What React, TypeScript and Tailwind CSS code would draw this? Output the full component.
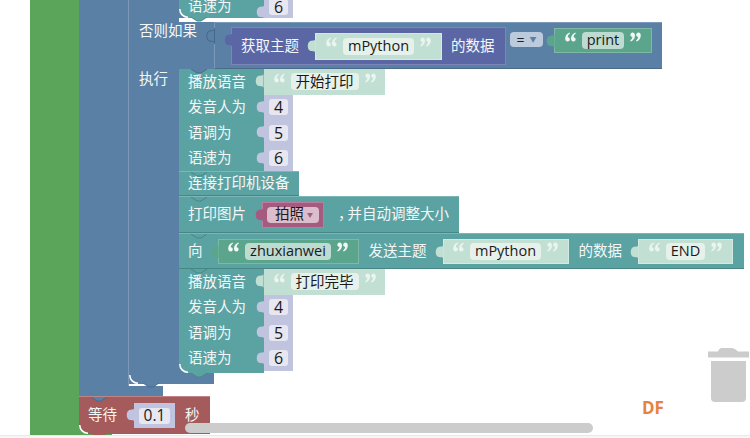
import type { ReactNode } from "react";

const CJK = "font-['Open_Sans','Noto_Sans_CJK_SC',sans-serif]";

// blockly puzzle tab, sits left of a value block
function Tab({ color, stroke = "none", className = "" }: { color: string; stroke?: string; className?: string }) {
    return (
        <svg width="9" height="16" viewBox="0 0 9 16" className={`absolute ${className}`}>
            <path d="M8.5,0.5 C8.5,3.5 5.5,2 3,3.2 C0,4.5 0,11.5 3,12.8 C5.5,14 8.5,12.5 8.5,15.5 z" fill={color} stroke={stroke} />
        </svg>
    );
}

// notch left by the previous statement block
function Notch({ color, edge, className = "left-[12px] top-0" }: { color: string; edge: string; className?: string }) {
    return (
        <svg width="17" height="5" viewBox="0 0 17 5" className={`absolute ${className}`}>
            <path d="M0,0 l6,4 h4 l6,-4 z" fill={color} />
            <path d="M0,0 l6,4 h4 l6,-4" fill="none" stroke={edge} />
        </svg>
    );
}

// rounded bottom-left of a block: what lies behind shows outside the white arc
function Corner({ behind }: { behind: string }) {
    return (
        <svg width="9" height="9" viewBox="0 0 9 9" className="absolute bottom-0 left-0">
            <path d="M0,0 H0.8 A8,8 0 0 0 9,8.2 V9 H0 z" fill={behind} />
            <path d="M0.8,0 A8,8 0 0 0 9,8.2" fill="none" stroke="#ffffff" strokeWidth="1.5" />
        </svg>
    );
}

function Label({ children, className = "" }: { children: ReactNode; className?: string }) {
    return <span className={`whitespace-nowrap text-[14.5px] leading-none text-[#f4f7f7] ${className}`}>{children}</span>;
}

function Quote({ open, fill }: { open?: boolean; fill: string }) {
    return (
        <svg width="11" height="10" viewBox="0 0 11 10" className={`mb-[8px] shrink-0 ${open ? "" : "rotate-180"}`}>
            <path d="M4.6,0.4 C2,1.4 0.2,3.6 0.2,6.6 C0.2,8.4 1.2,9.6 2.6,9.6 C3.9,9.6 4.8,8.6 4.8,7.3 C4.8,6 3.9,5.2 2.8,5.2 C2.9,3.6 3.7,2.4 5,1.5 z" fill={fill} />
            <path d="M10.4,0.4 C7.8,1.4 6,3.6 6,6.6 C6,8.4 7,9.6 8.4,9.6 C9.7,9.6 10.6,8.6 10.6,7.3 C10.6,6 9.7,5.2 8.6,5.2 C8.7,3.6 9.5,2.4 10.8,1.5 z" fill={fill} />
        </svg>
    );
}

function Str({ text, dark, width, height = "h-[25px]" }: { text: string; dark?: boolean; width: string; height?: string }) {
    const bg = dark ? "bg-[#5ba58c] border-[#7fb8a5]" : "bg-[#c2dfd3] border-[#d4e9e0]";
    return (
        <div className={`relative flex shrink-0 items-center justify-center gap-[6px] border ${height} ${width} ${bg}`}>
            <Tab color={dark ? "#5ba58c" : "#c2dfd3"} className="-left-[9px] top-[4px]" />
            <Quote open fill={dark ? "#f1f8f5" : "#eaf5f0"} />
            <span className={`flex h-[17px] items-center rounded-[4px] px-[5px] text-[14.5px] leading-none text-[#1a1a1a] ${dark ? "bg-[#bddbd1]" : "bg-[#e6f1ec]"}`}>
                {text}
            </span>
            <Quote fill={dark ? "#f1f8f5" : "#eaf5f0"} />
        </div>
    );
}

function Num({ value, className = "" }: { value: string; className?: string }) {
    return (
        <div className={`relative flex h-full w-[29px] shrink-0 items-center pl-[5px] ${className}`}>
            <div className="absolute inset-0 bg-[#c1c4de]" />
            <Tab color="#c1c4de" className="-left-[8px] top-[4px]" />
            <span className="relative flex h-[16px] w-[19px] items-center justify-center rounded-[3px] bg-[#e6e7f1] text-[16px] leading-none text-[#1a1a1a]">
                {value}
            </span>
        </div>
    );
}

function SpeakBlock({ text }: { text: string }) {
    const rows = [
        ["发音人为", "4"],
        ["语调为", "5"],
        ["语速为", "6"],
    ];
    return (
        <div className="flex flex-col">
            <div className="flex h-[25.5px]">
                <div className="flex w-[85px] items-center bg-[#5ba3a3] pl-[9px]">
                    <Label>播放语音</Label>
                </div>
                <Str text={text} width="w-[121px]" height="h-[25.5px] border-0" />
            </div>
            {rows.map(([name, value]) => (
                <div key={name} className="flex h-[25.5px]">
                    <div className="flex w-[85px] items-center bg-[#5ba3a3] pl-[9px]">
                        <Label>{name}</Label>
                    </div>
                    <Num value={value} />
                </div>
            ))}
        </div>
    );
}

function Row({ children, className }: { children: ReactNode; className: string }) {
    return (
        <div className={`relative flex items-center border-y border-b-[#488585] border-t-[#7db6b6] bg-[#5ba3a3] pl-[9px] ${className}`}>
            <Notch color="#5ba3a3" edge="#488585" />
            {children}
        </div>
    );
}

export default function App() {
    return (
        <div className={`relative h-[438px] w-[750px] overflow-hidden bg-white ${CJK}`}>
            <div className="h-[435px] overflow-hidden pl-[30px]">
                <div className="flex">
                    {/* outer loop spine */}
                    <div className="w-[49px] bg-[#5ba55b]" />
                    <div className="flex flex-col">
                        <div className="flex h-[396px] flex-col">
                            <div className="flex h-[386px]">
                                <div className="w-[50px] border-r border-r-[#7d99b7] bg-[#5b80a5]" />
                                <div className="flex flex-col">
                                    {/* end of the branch above */}
                                    <div className="flex h-[22px]">
                                        <div className="w-[50px] bg-[#5b80a5]" />
                                        <div className="flex h-[18px]">
                                            <div className="relative flex w-[85px] items-center bg-[#5ba3a3] pb-[5px] pl-[9px]">
                                                <Label>语速为</Label>
                                                <Corner behind="#5b80a5" />
                                                <Notch color="#5ba3a3" edge="#488585" className="-bottom-[4px] left-[12px]" />
                                            </div>
                                            <Num value="6" className="pb-[5px]" />
                                        </div>
                                    </div>
                                    {/* 否则如果 header */}
                                    <div className="flex h-[47px] w-[533px]">
                                        <div className="relative w-[85px] shrink-0 bg-[#5b80a5]">
                                            <Label className="absolute left-[10px] top-[2px] h-[18px] leading-[18px]">否则如果</Label>
                                            <Tab color="#5b80a5" stroke="#46688a" className="left-[77px] top-[6px]" />
                                        </div>
                                        <div className="flex grow border-y border-l border-b-[#4a6a8a] border-l-[#7d99b7] border-t-[#7d99b7] bg-[#5b80a5]">
                                            <div className="relative ml-[16px] mt-[4px] flex h-[38px] w-[275px] items-center border border-[#7b85b7] bg-[#5b67a5]">
                                                <Tab color="#5b67a5" className="-left-[8px] top-[4px]" />
                                                <Label className="ml-[9px]">获取主题</Label>
                                                <div className="ml-[16px]">
                                                    <Str text="mPython" width="w-[127px]" height="h-[27px]" />
                                                </div>
                                                <Label className="ml-[9px]">的数据</Label>
                                            </div>
                                            <div className="ml-[4px] mt-[9px] flex h-[15px] w-[33px] items-center justify-center gap-[5px] rounded-[4px] bg-[#bccade]">
                                                <span className="text-[14px] leading-none text-[#222]">=</span>
                                                <span className="text-[7px] leading-none text-[#5b80a5]">▼</span>
                                            </div>
                                            <div className="ml-[11px] mt-[5px]">
                                                <Str text="print" dark width="w-[98px]" />
                                            </div>
                                        </div>
                                    </div>
                                    {/* 执行 body */}
                                    <div className="flex">
                                        <div className="w-[50px] bg-[#5b80a5] pl-[10px] pt-[3px]">
                                            <Label className="block h-[18px] leading-[18px]">执行</Label>
                                        </div>
                                        <div className="relative flex flex-col items-start">
                                            <Notch color="#5b80a5" edge="#4a6a8a" />
                                            <SpeakBlock text="开始打印" />
                                            <Row className="h-[25px] w-[120px]">
                                                <Label>连接打印机设备</Label>
                                            </Row>
                                            <Row className="h-[37px] w-[280px]">
                                                <Label>打印图片</Label>
                                                <div className="relative ml-[16px] flex h-[26px] w-[62px] items-center border border-[#bb7f9d] bg-[#a55b80] pl-[4px]">
                                                    <Tab color="#a55b80" className="-left-[8px] top-[4px]" />
                                                    <span className="flex h-[16px] w-[52px] items-center justify-center gap-[3px] rounded-[4px] bg-[#dbbdcc] pl-[2px] text-[14.5px] leading-none text-[#1a1a1a]">
                                                        拍照
                                                        <span className="text-[6px] text-[#a55b80]">▼</span>
                                                    </span>
                                                </div>
                                                <Label className="ml-[14px]">
                                                    <span className="tracking-[-5px]">，</span>并自动调整大小
                                                </Label>
                                            </Row>
                                            <Row className="h-[36px] w-[565px]">
                                                <Label>向</Label>
                                                <div className="ml-[15px]">
                                                    <Str text="zhuxianwei" dark width="w-[141px]" />
                                                </div>
                                                <Label className="ml-[10px]">发送主题</Label>
                                                <div className="ml-[16px]">
                                                    <Str text="mPython" width="w-[126px]" />
                                                </div>
                                                <Label className="ml-[10px]">的数据</Label>
                                                <div className="ml-[16px]">
                                                    <Str text="END" width="w-[95px]" />
                                                </div>
                                            </Row>
                                            <div className="relative">
                                                <Notch color="#5ba3a3" edge="#488585" />
                                                <SpeakBlock text="打印完毕" />
                                                <div className="h-[2px] w-[85px] bg-[#5ba3a3]" />
                                                <Corner behind="#5b80a5" />
                                            </div>
                                        </div>
                                    </div>
                                    <div className="relative h-[11px] w-[85px] bg-[#5b80a5]">
                                        <Notch color="#5ba3a3" edge="#488585" className="left-[62px] top-0" />
                                        <Notch color="#5b80a5" edge="#4a6a8a" className="-bottom-[4px] left-[14px]" />
                                        <Corner behind="#5b80a5" />
                                    </div>
                                </div>
                            </div>
                            <div className="h-[10px] w-[84px] bg-[#5b80a5]" />
                        </div>
                        {/* 等待 block */}
                        <div className="relative flex h-[38px] w-[131px] items-center border-t border-t-[#bd8585] bg-[#a55b5b] pl-[9px]">
                            <Notch color="#5b80a5" edge="#4a6a8a" />
                            <Label>等待</Label>
                            <div className="relative ml-[17px] flex h-[25px] w-[41px] items-center justify-center bg-[#c1c4de]">
                                <Tab color="#c1c4de" className="-left-[8px] top-[4px]" />
                                <span className="flex h-[16px] w-[31px] items-center justify-center rounded-[3px] bg-[#e6e7f1] text-[15.5px] leading-none text-[#1a1a1a]">
                                    0.1
                                </span>
                            </div>
                            <Label className="ml-[10px]">秒</Label>
                            <Corner behind="#5ba55b" />
                            <Notch color="#a55b5b" edge="#a55b5b" className="-bottom-[4px] left-[12px]" />
                        </div>
                    </div>
                </div>
                <div className="h-px w-[82px] bg-[#5ba55b]" />
            </div>
            <div className="h-[3px] border-t border-[#e9e9e9] bg-[#f6f6f6]" />

            {/* workspace chrome */}
            <div className="absolute left-[185px] top-[423px] h-[10px] w-[408px] rounded-full bg-[#cccccc]" />
            <svg width="42" height="54" viewBox="0 0 42 54" className="absolute left-[708px] top-[348px]">
                <path d="M0,3.5 h10 q1,-3.5 4,-3.5 h10 q3,0 6,3.5 h11 v6 h-41 z" fill="#cccccc" />
                <path d="M3,13 h35 v37 q0,4 -4,4 h-27 q-4,0 -4,-4 z" fill="#cccccc" />
            </svg>
            <span className="absolute left-[642px] top-[397px] font-['Open_Sans',sans-serif] text-[17px] font-bold leading-[22px] text-[#e8803f]">
                DF
            </span>
        </div>
    );
}
